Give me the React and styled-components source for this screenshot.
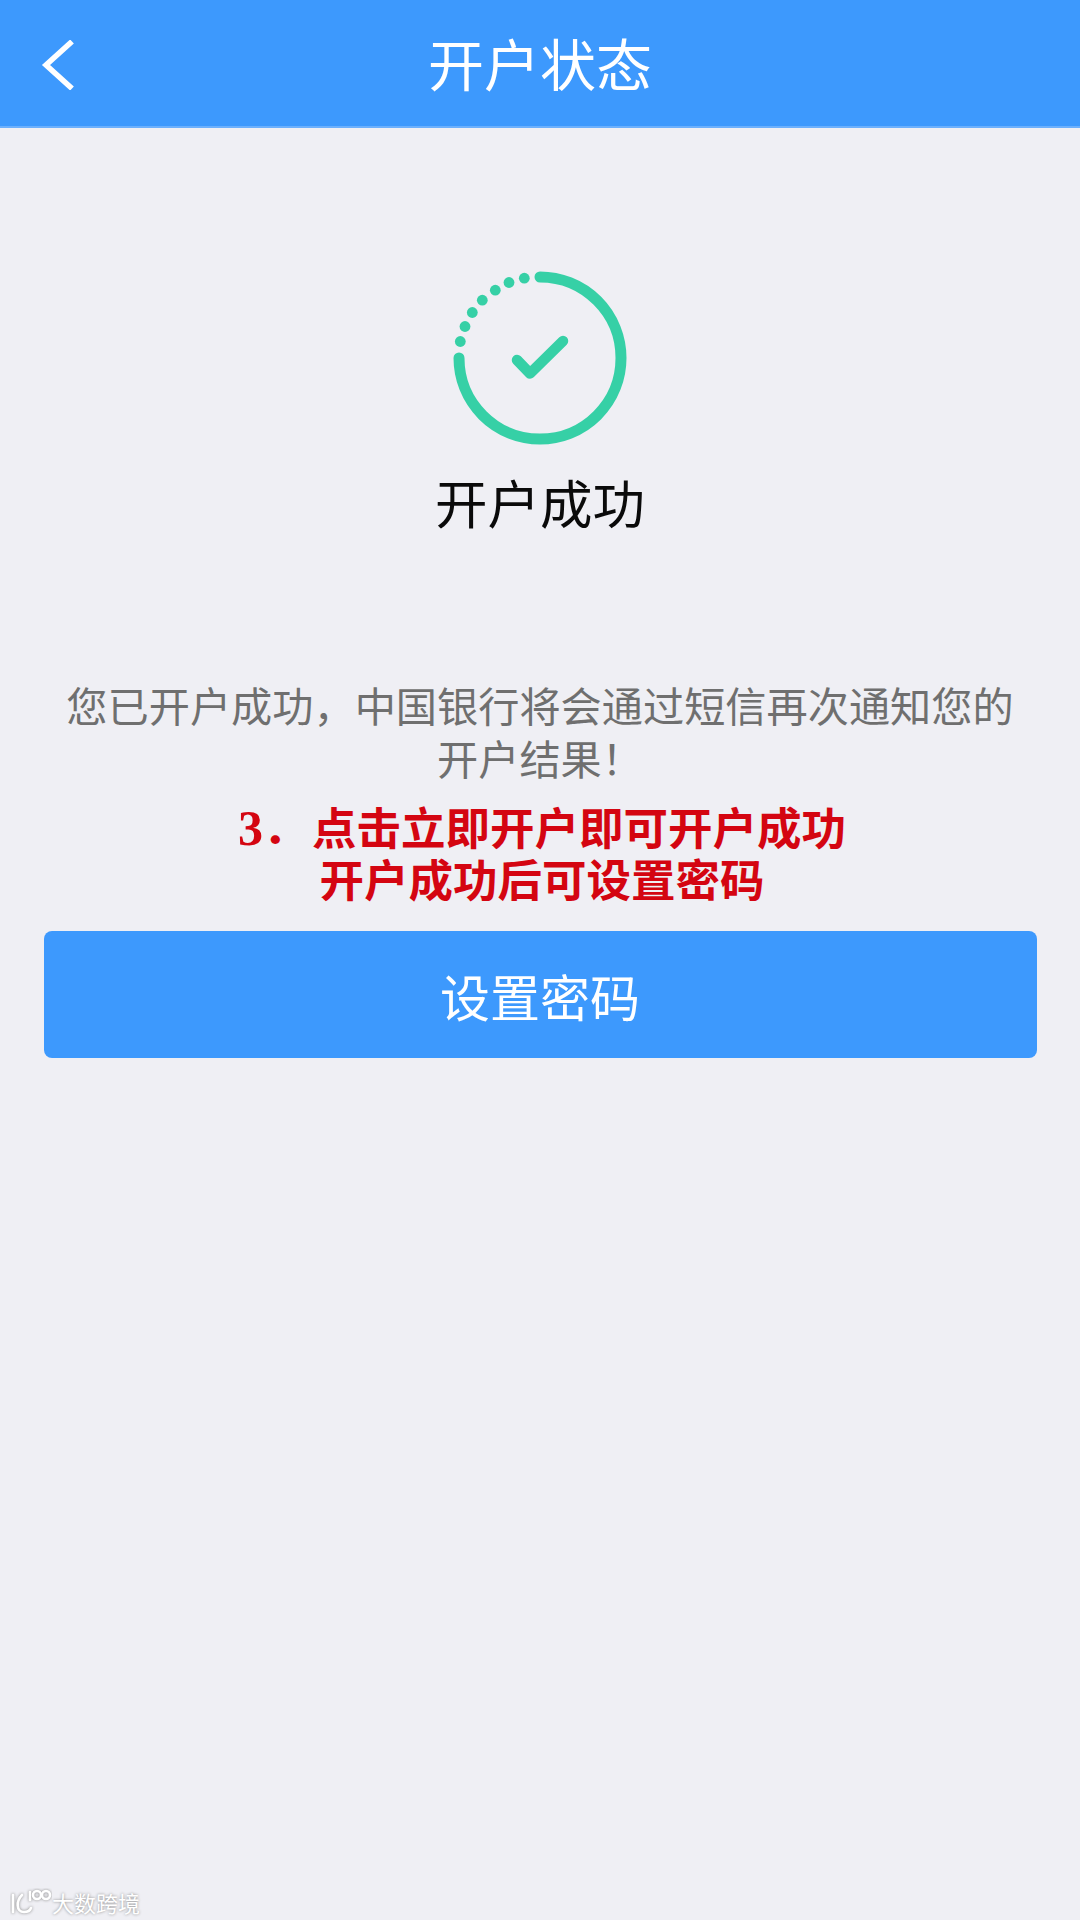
import styled, { createGlobalStyle } from "styled-components";

const CJK = `"Noto Sans CJK SC", "Noto Sans", sans-serif`;

const GlobalStyle = createGlobalStyle`
  html, body {
    margin: 0;
    padding: 0;
    background: #efeff4;
  }
`;

const DOTS = [
  [74.3, 10.2],
  [59, 14.5],
  [45.3, 22.2],
  [32.3, 32.2],
  [22.3, 44.5],
  [15, 58.5],
  [10.3, 73.5],
];

const App = () => {
  return (
    <Page>
      <GlobalStyle />
      <Header>
        <BackButton>
          <svg width="34" height="50" viewBox="0 0 34 50" fill="none">
            <path d="M31 1.5 L5 25 L31 48.5" stroke="#fff" strokeWidth="5.5" />
          </svg>
        </BackButton>
        <Title>开户状态</Title>
      </Header>

      <Status>
        <StatusIcon />
        <StatusText>开户成功</StatusText>
      </Status>

      <Message>
        您已开户成功，中国银行将会通过短信再次通知您的
        <br />
        开户结果！
      </Message>

      <Note>
        <NoteLine>
          <NoteIndex>
            <NoteDigit>3</NoteDigit>．
          </NoteIndex>
          点击立即开户即可开户成功
        </NoteLine>
        <NoteLine>开户成功后可设置密码</NoteLine>
      </Note>

      <SubmitButton>设置密码</SubmitButton>

      <Watermark>
        <WatermarkLogo />
        <WatermarkText>大数跨境</WatermarkText>
      </Watermark>
    </Page>
  );
};

const StatusIcon = () => (
  <svg width="180" height="180" viewBox="0 0 180 180" fill="none" style={{ display: "block" }}>
    <path
      d="M90 9 A81 81 0 1 1 9 90"
      stroke="#36d0a6"
      strokeWidth="11"
      strokeLinecap="round"
    />
    {DOTS.map(([x, y]) => (
      <circle key={x} cx={x} cy={y} r="5.4" fill="#36d0a6" />
    ))}
    <path
      d="M67 92 L80 105.5 L113 73"
      stroke="#36d0a6"
      strokeWidth="10.5"
      strokeLinecap="round"
      strokeLinejoin="round"
    />
  </svg>
);

const WatermarkLogo = () => (
  <svg width="42" height="28" viewBox="0 0 42 28" fill="none" style={{ display: "block" }}>
    <g stroke="#fff" strokeWidth="2.6" strokeLinecap="round" filter="drop-shadow(0 0 1.5px #888)">
      <path d="M3 7 V24" />
      <path d="M12 7 C6 13 6 24 14 24 C17 24 20 23 21 20" />
      <path d="M20 4 V12" />
      <circle cx="27" cy="7" r="4" />
      <circle cx="36" cy="7" r="4" />
    </g>
  </svg>
);

const Page = styled.div`
  position: relative;
  display: flex;
  flex-direction: column;
  align-items: center;
  height: 1920px;
  overflow: hidden;
  background: #efeff4;
  font-family: ${CJK};
`;

const Header = styled.header`
  position: relative;
  display: flex;
  align-items: center;
  justify-content: center;
  align-self: stretch;
  box-sizing: border-box;
  height: 128px;
  padding-bottom: 2px;
  background: #3d99fd;
  border-bottom: 2px solid #6cb0fd;
`;

const BackButton = styled.div`
  position: absolute;
  left: 41px;
  top: 40px;
  line-height: 0;
`;

const Title = styled.h1`
  margin: 0;
  font-size: 56px;
  line-height: 64px;
  font-weight: 400;
  color: #fff;
`;

const Status = styled.section`
  display: flex;
  flex-direction: column;
  align-items: center;
  margin-top: 140px;
`;

const StatusText = styled.div`
  margin-top: 21px;
  font-size: 52.5px;
  line-height: 64px;
  color: #0a0a0a;
`;

const Message = styled.p`
  margin: 145px 0 0;
  font-size: 41.2px;
  line-height: 53px;
  text-align: center;
  color: #6f6f6f;
  white-space: nowrap;
`;

const Note = styled.div`
  display: flex;
  flex-direction: column;
  align-items: center;
  margin: 16px 0 0 4px;
  color: #d40511;
  font-size: 44.5px;
  font-weight: 700;
`;

const NoteLine = styled.div`
  height: 52px;
  line-height: 52px;
  white-space: nowrap;
`;

const NoteIndex = styled.span`
  display: inline-block;
  width: 74px;
  height: 52px;
  vertical-align: top;
`;

const NoteDigit = styled.span`
  font-family: "Liberation Serif", serif;
  font-size: 50px;
`;

const SubmitButton = styled.button`
  display: block;
  width: 993px;
  height: 127px;
  margin-top: 27px;
  padding: 0;
  border: 0;
  border-radius: 8px;
  background: #3d99fd;
  color: #fff;
  font-family: inherit;
  font-size: 50px;
`;

const Watermark = styled.div`
  position: absolute;
  left: 10px;
  bottom: 4px;
  display: flex;
  align-items: center;
`;

const WatermarkText = styled.span`
  font-size: 22px;
  line-height: 28px;
  color: #fff;
  text-shadow: 0 0 3px #888;
`;

export default App;
